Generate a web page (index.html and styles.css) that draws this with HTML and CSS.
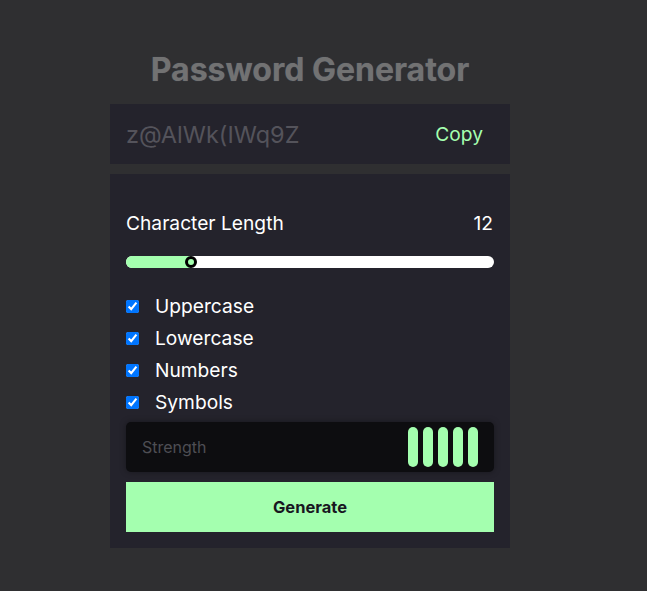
FILE: index.html
```html
<!DOCTYPE html>
<html lang="en">
<head>
<meta charset="utf-8">
<title>Password Generator</title>
<link rel="stylesheet" href="styles.css">
</head>
<body>
<main class="app">
  <h1 class="title">Password Generator</h1>
  <div class="output">
    <span class="password">z@AlWk(IWq9Z</span>
    <button class="copy">Copy</button>
  </div>
  <section class="panel">
    <div class="length-row">
      <span>Character Length</span>
      <span>12</span>
    </div>
    <div class="slider">
      <div class="slider-fill" style="width: 65px"></div>
      <div class="slider-thumb"></div>
    </div>
    <ul class="options">
      <li><input type="checkbox" checked><span>Uppercase</span></li>
      <li><input type="checkbox" checked><span>Lowercase</span></li>
      <li><input type="checkbox" checked><span>Numbers</span></li>
      <li><input type="checkbox" checked><span>Symbols</span></li>
    </ul>
    <div class="strength">
      <span class="strength-label">Strength</span>
      <div class="bars">
        <span class="bar"></span><span class="bar"></span><span class="bar"></span><span class="bar"></span><span class="bar"></span>
      </div>
    </div>
    <button class="generate">Generate</button>
  </section>
</main>
</body>
</html>
```
FILE: styles.css
```css
* { box-sizing: border-box; }
html, body { margin: 0; padding: 0; }
body {
  background: #2f2f31;
  font-family: Inter, "Noto Sans", sans-serif;
  color: #e6e5ea;
  min-height: 591px;
}
.app {
  width: 400px;
  margin-left: 110px;
  padding-top: 50px;
  display: flex;
  flex-direction: column;
}
.title {
  margin: 0 0 15px;
  text-align: center;
  font-size: 32px;
  line-height: 39px;
  font-weight: 700;
  color: #727272;
  text-shadow: 0 0 1px rgba(90, 110, 140, 0.6);
}
.output {
  height: 60px;
  background: #24232c;
  display: flex;
  align-items: center;
  justify-content: space-between;
  padding: 0 27px 0 16px;
}
.password {
  font-size: 23.5px;
  color: #54535b;
}
.copy {
  background: none;
  border: 0;
  padding: 0;
  font-family: inherit;
  font-size: 19.2px;
  color: #a4ffaf;
}
.panel {
  margin-top: 10px;
  background: #24232c;
  padding: 36px 16px 16px;
  display: flex;
  flex-direction: column;
}
.length-row {
  display: flex;
  justify-content: space-between;
  font-size: 19.2px;
  line-height: 26px;
  color: #ffffff;
  padding-right: 1px;
}
.slider {
  position: relative;
  margin-top: 20px;
  height: 12px;
  border-radius: 6px;
  background: #ffffff;
}
.slider-fill {
  height: 100%;
  background: #a4ffaf;
  border-radius: 6px 0 0 6px;
}
.slider-thumb {
  position: absolute;
  left: 59px;
  top: 0;
  width: 12px;
  height: 12px;
  border-radius: 50%;
  background: #a4ffaf;
  border: 3.5px solid #000;
}
.options {
  list-style: none;
  margin: 22px 0 0;
  padding: 0;
  display: flex;
  flex-direction: column;
}
.options li {
  display: flex;
  align-items: center;
  height: 32px;
  font-size: 19.2px;
  color: #ffffff;
}
.options input {
  margin: 0 16px 0 0;
  width: 13px;
  height: 13px;
}
.strength {
  margin-top: 4px;
  height: 50px;
  background: #0d0d10;
  border-radius: 5px;
  box-shadow: 0 0 6px rgba(0, 0, 0, 0.35);
  display: flex;
  align-items: center;
  justify-content: space-between;
  padding: 0 16px;
}
.strength-label {
  font-size: 16px;
  color: #4e4e54;
}
.bars {
  display: flex;
  gap: 5px;
}
.bar {
  width: 10px;
  height: 40px;
  border-radius: 5px;
  background: #a4ffaf;
}
.generate {
  margin-top: 10px;
  height: 50px;
  border: 0;
  background: #a4ffaf;
  font-family: inherit;
  font-size: 16.5px;
  font-weight: 700;
  color: #18171f;
}
```
